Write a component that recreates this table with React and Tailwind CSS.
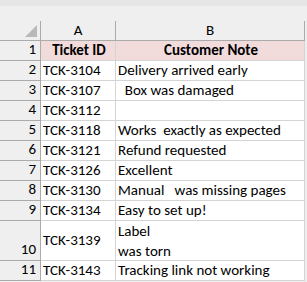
const rows = [
  { n: 1, a: 'Ticket ID', b: 'Customer Note', head: true },
  { n: 2, a: 'TCK-3104', b: 'Delivery arrived early' },
  { n: 3, a: 'TCK-3107', b: '  Box was damaged' },
  { n: 4, a: 'TCK-3112', b: '' },
  { n: 5, a: 'TCK-3118', b: 'Works  exactly as expected' },
  { n: 6, a: 'TCK-3121', b: 'Refund requested' },
  { n: 7, a: 'TCK-3126', b: 'Excellent' },
  { n: 8, a: 'TCK-3130', b: 'Manual   was missing pages' },
  { n: 9, a: 'TCK-3134', b: 'Easy to set up!' },
  { n: 10, a: 'TCK-3139', b: 'Label\nwas torn', tall: true },
  { n: 11, a: 'TCK-3143', b: 'Tracking link not working' },
];

function Row({ row }) {
  const h = row.tall ? 'h-[40px]' : 'h-[20px]';
  const fill = row.head ? 'bg-[#f2dcdb] font-bold justify-center' : 'bg-white';
  return (
    <>
      <div className={`${h} bg-[#efefef] border-r border-b border-[#ababab] flex items-end justify-end pr-[4px] pb-[1px] text-[#000]`}>
        {row.n}
      </div>
      <div className={`${h} ${fill} border-r border-b border-[#d4d4d4] flex items-center pl-[2px]`}>
        {row.a}
      </div>
      <div className={`${h} ${fill} border-r border-b border-[#d4d4d4] flex ${row.tall ? 'items-stretch' : 'items-center'} pl-[2px] whitespace-pre`}>
        {row.tall ? (
          <div className="flex flex-col justify-between leading-[20px]">
            <span>Label</span>
            <span>was torn</span>
          </div>
        ) : (
          row.b
        )}
      </div>
    </>
  );
}

export default function App() {
  return (
    <div
      className="w-[307px] h-[282px] bg-[#efefef] overflow-hidden text-[15px] leading-[19px] text-black"
      style={{ fontFamily: 'Carlito, Lato, "Liberation Sans", sans-serif' }}
    >
      <div className="h-[6px] bg-[#e6e6e6]" />
      <div className="h-[15px]" />
      <div className="grid grid-cols-[41px_75px_189px]">
        <div className="h-[20px] border-r border-b border-[#ababab] relative">
          <div className="absolute right-[3px] bottom-[3px] w-0 h-0 border-l-[12px] border-l-transparent border-b-[12px] border-b-[#b9b9b9]" />
        </div>
        <div className="h-[20px] border-r border-b border-[#ababab] flex items-center justify-center">A</div>
        <div className="h-[20px] border-r border-b border-[#ababab] flex items-center justify-center">B</div>
        {rows.map((r) => (
          <Row key={r.n} row={r} />
        ))}
      </div>
    </div>
  );
}
